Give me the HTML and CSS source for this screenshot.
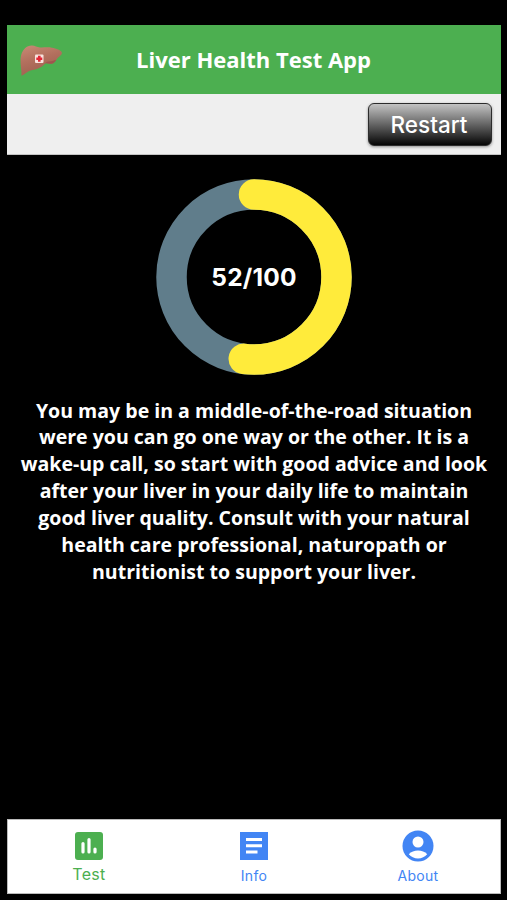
FILE: index.html
```
<!DOCTYPE html>
<html lang="en">
<head>
  <meta charset="UTF-8">
  <meta name="viewport" content="width=device-width, initial-scale=1.0">
  <title>Liver Health Test App</title>
  <link rel="stylesheet" href="styles.css">
</head>
<body>
  <div class="app">
    <header class="header">
      <svg class="logo" viewBox="0 0 44 34">
        <defs>
          <linearGradient id="liver" x1="0" y1="0" x2="0.4" y2="1">
            <stop offset="0" stop-color="#c98b76"/>
            <stop offset="0.5" stop-color="#b3705e"/>
            <stop offset="1" stop-color="#9f5f4f"/>
          </linearGradient>
        </defs>
        <path fill="url(#liver)" d="M1.500 32.800C1.800 28 0.200 22 0.600 15.500C1 10.500 2.500 7.500 5 5.200C7 3.200 9.500 2.400 12 2.500C15 2.600 17 4.300 20 4.400C24 4.600 28 3.900 32 4.700C36 5.400 41.500 7 41.900 9.800C42 12.500 38.500 13.500 36.500 16.500C35 19 33.500 21 30.500 20.800C28.500 20.700 27 20 25.500 20.200C23 22.500 21 24.500 18 25.500C14 27 11 27 8.300 28.500C5.500 30 3.500 32 1.500 32.800Z"/>
        <path fill="#a0544e" d="M24.500 20.700C26 18.500 28 18.700 31 18.300C33 18 35 17 36.300 16.800C35 19 33.500 21 30.500 20.800C28 20.600 26.500 20 24.500 20.700Z"/>
        <rect x="15" y="11.500" width="8.500" height="8.500" rx="1" fill="#f8e3de"/>
        <path fill="#e32636" d="M18 12.800h2.600v1.700h1.700v2.600h-1.700v1.700h-2.600v-1.700h-1.700v-2.600h1.700z"/>
      </svg>
      <h1 class="title">Liver Health Test App</h1>
    </header>

    <div class="toolbar">
      <button class="btn-restart">Restart</button>
    </div>

    <main class="result">
      <div class="score">
        <svg class="score-ring" viewBox="0 0 196 196">
          <circle class="ring-track" cx="98" cy="98" r="82.500"/>
          <circle class="ring-value" cx="98" cy="98" r="82.500" pathLength="100" transform="rotate(-90 98 98)"/>
        </svg>
        <span class="score-text">52/100</span>
      </div>
      <p class="advice">
        You may be in a middle-of-the-road situation<br>
        were you can go one way or the other. It is a<br>
        wake-up call, so start with good advice and look<br>
        after your liver in your daily life to maintain<br>
        good liver quality. Consult with your natural<br>
        health care professional, naturopath or<br>
        nutritionist to support your liver.
      </p>
    </main>

    <nav class="tabs">
      <a class="tab active">
        <svg class="tab-icon" viewBox="0 0 32 32">
          <rect x="2" y="2" width="28" height="28" rx="3" fill="currentColor"/>
          <g stroke="#fff" stroke-width="3.2" stroke-linecap="round">
            <path d="M10 13.500v8.500M16 9.500v12.500M22 19v3"/>
          </g>
        </svg>
        <span class="tab-label">Test</span>
      </a>
      <a class="tab">
        <svg class="tab-icon" viewBox="0 0 32 32">
          <rect x="2" y="2" width="28" height="28" fill="currentColor"/>
          <path fill="#fff" d="M8 8h16v3H8zM8 14.300h16v3H8zM8 20.500h11.500v3H8z"/>
        </svg>
        <span class="tab-label">Info</span>
      </a>
      <a class="tab">
        <svg class="tab-icon" viewBox="0 0 32 32">
          <circle cx="16" cy="16" r="15.500" fill="currentColor"/>
          <circle cx="16" cy="12" r="5.500" fill="#fff"/>
          <path fill="#fff" d="M6.800 24.300C9 21.800 12.500 20.600 16 20.600S23 21.800 25.200 24.300C23 27 19.700 28.500 16 28.500S9 27 6.800 24.300Z"/>
        </svg>
        <span class="tab-label">About</span>
      </a>
    </nav>
  </div>
</body>
</html>
```
FILE: styles.css
```
* {
  box-sizing: border-box;
}
body {
  margin: 0;
  background-color: #000;
  font-family: Inter, sans-serif;
}
.app {
  display: flex;
  flex-direction: column;
  height: 900px;
  padding: 25px 6px 6px 7px;
}
.header {
  display: grid;
  grid-template-columns: 44px 1fr 44px;
  align-items: center;
  height: 69px;
  padding: 0 14px 0 13px;
  background-color: #4caf50;
}
.logo {
  width: 44px;
  height: 34px;
}
.title {
  margin: 0 0 2px;
  color: #fff;
  font-family: "Open Sans", sans-serif;
  font-size: 22px;
  font-weight: 700;
  text-align: center;
  white-space: nowrap;
}
.toolbar {
  display: flex;
  justify-content: flex-end;
  height: 61px;
  padding: 9px 9px 0 0;
  background-color: #efefef;
  border-bottom: 1px solid #c4c4c4;
}
.btn-restart {
  width: 124px;
  height: 43px;
  padding: 0 2px 0 0;
  border: 1.5px solid #2c2c2c;
  border-radius: 6px;
  background: linear-gradient(#c8c8c8, #000) border-box;
  box-shadow: 0 1px 3px rgba(0, 0, 0, 0.4);
  color: #fff;
  font-family: Inter, sans-serif;
  font-size: 22.5px;
  font-weight: 500;
}
.result {
  display: flex;
  flex: 1;
  flex-direction: column;
  align-items: center;
  padding-top: 24px;
}
.score {
  display: grid;
  place-items: center;
  width: 196px;
  height: 196px;
}
.score-ring,
.score-text {
  grid-area: 1 / 1;
}
.score-ring {
  width: 196px;
  height: 196px;
}
.ring-track,
.ring-value {
  fill: none;
  stroke-width: 30.5;
}
.ring-track {
  stroke: #607d8b;
}
.ring-value {
  stroke: #ffeb3b;
  stroke-dasharray: 52 100;
  stroke-linecap: round;
}
.score-text {
  color: #fff;
  font-size: 24.5px;
  font-weight: 700;
  letter-spacing: 0.2px;
}
.advice {
  margin: 22.5px 0 0;
  color: #fff;
  font-family: "Open Sans", sans-serif;
  font-size: 19.55px;
  font-weight: 700;
  line-height: 26.9px;
  text-align: center;
  white-space: nowrap;
}
.tabs {
  display: grid;
  grid-template-columns: repeat(3, 1fr);
  height: 75px;
  background-color: #fff;
  border: 1px solid #bbb;
}
.tab {
  display: flex;
  flex-direction: column;
  align-items: center;
  padding-top: 10px;
  color: #4285f4;
}
.tab-icon {
  width: 32px;
  height: 32px;
}
.tab-label {
  margin-top: 4px;
  font-size: 14px;
  letter-spacing: 0.3px;
  line-height: 20px;
}
.active {
  padding-right: 2px;
  color: #4caf50;
}
.active .tab-label {
  margin-top: 2px;
  font-size: 16px;
}
```
